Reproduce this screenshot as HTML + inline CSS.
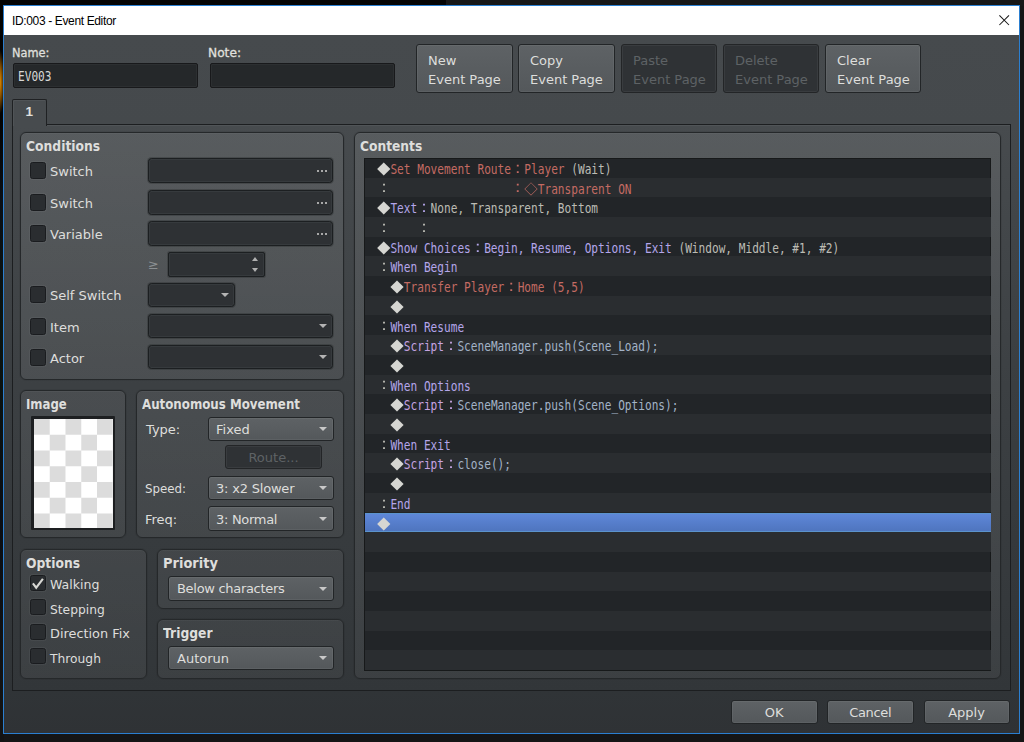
<!DOCTYPE html>
<html lang="en">
<head>
<meta charset="utf-8">
<title>ID:003 - Event Editor</title>
<style>
html,body{margin:0;padding:0;}
body{width:1024px;height:742px;overflow:hidden;position:relative;background:#131313;
  font-family:"DejaVu Sans","Liberation Sans",sans-serif;font-size:13px;color:#dededc;}
*{box-sizing:border-box;}
.abs,.abs>*{position:absolute;}
#desk{position:absolute;left:0;top:0;width:1024px;height:742px;
  background:
   radial-gradient(ellipse 4.5px 32px at 0px 82px,#e08a00 0%,#8a5200 45%,rgba(0,0,0,0) 100%),
   linear-gradient(90deg,#040404 0,#040404 446px,#171717 446px) 0 0/1024px 6px no-repeat,
   linear-gradient(#030303 0,#030303 120px,#0a0f16 200px,#0b1410 330px,#0a0e14 520px,#131313 700px) 0 0/4px 742px no-repeat,
   #151515;}
#win{position:absolute;left:3px;top:5px;width:1017px;height:729px;border:1px solid #2b7fd0;
  background:linear-gradient(#464a4d 30px,#45494c 119px,#3a3e41 380px,#303437 685px,#2f3235 728px);}
#title{position:absolute;left:0;top:0;width:1015px;height:29px;background:#fff;color:#000;font-size:12px;}
#title span{position:absolute;left:8px;top:8px;font-family:"Liberation Sans",sans-serif;font-size:12px;letter-spacing:-0.36px;white-space:nowrap;}
#close{position:absolute;left:995px;top:8.6px;}
/* everything below positioned in page coordinates via #ui offset */
#ui{position:absolute;left:-4px;top:-6px;width:1024px;height:742px;}
#ui div,#ui span{position:absolute;}
.lbl{white-space:nowrap;line-height:16px;height:16px;}
.b{font-weight:bold;font-size:13.6px;color:#dededc;transform-origin:0 50%;transform:scaleX(.908);}
.field{background:#2e3134;border:1px solid #1c1f21;border-radius:3.5px;box-shadow:inset 0 0 0 1px #363a3d,0 0 0 1px rgba(28,31,34,.28);}
.dark{background:#25282a;border:1px solid #18191b;border-radius:2px;box-shadow:inset 0 0 0 1px #2c2f31;}
.btn{border:1px solid #222527;border-radius:3px;background:linear-gradient(#5e6265,#54585b);box-shadow:inset 0 0 0 1px rgba(255,255,255,.05);}
.btn.dis{background:#2f3235;color:#5e6265;border-color:#232527;}
.grp{border:1px solid #25282a;border-radius:6px;box-shadow:inset 0 1px 0 rgba(255,255,255,.035),0 0 0 1px rgba(0,0,0,.06);}
.cb{width:16px;height:17px;background:#2a2d30;border:1px solid #1a1c1f;border-radius:2.5px;box-shadow:0 0 0 1px rgba(255,255,255,.045);}
.field+.arr{border-top-color:#b4b4b4;}
.arr{width:0;height:0;border-left:4px solid transparent;border-right:4px solid transparent;border-top:4.5px solid #c8c8c8;}
.arru{width:0;height:0;border-left:3.6px solid transparent;border-right:3.6px solid transparent;border-bottom:4px solid #b0b0b0;}
.arrd{width:0;height:0;border-left:3.6px solid transparent;border-right:3.6px solid transparent;border-top:4px solid #b0b0b0;}
.mono{font-family:"DejaVu Sans Mono","Liberation Mono",monospace;font-size:13.3px;line-height:19px;height:19px;white-space:pre;transform:scaleX(.8368);transform-origin:0 0;color:#d8d8d6;}
#checker{background:conic-gradient(#fff 0 25%,#dcdcdc 0 50%,#fff 0 75%,#dcdcdc 0) 0 0/31.5px 31.5px;}
#list{background:#222528;border:1px solid #17191a;}
.odd{background:#2a2d30;}
.sel{background:linear-gradient(#5f88da,#4e74bd);box-shadow:inset 0 1px 0 #5b93cc,inset 0 -1px 0 #5b93cc;}
.row{left:377.2px;height:19.7px;line-height:19.7px;white-space:pre;font-family:"DejaVu Sans Mono","Liberation Mono",monospace;font-size:13.3px;transform:scaleX(.8368);transform-origin:0 0;}
#ui .row span,#ui .row i{position:static;font-style:normal;}
.row i.w{display:inline-block;width:16.014px;height:19.7px;line-height:19.7px;vertical-align:top;text-align:center;transform:scaleX(1.195);font-family:"WenQuanYi Zen Hei","Noto Sans CJK JP",sans-serif;font-size:13.3px;}
.row i.dia,.row i.dia2{font-size:14px;position:relative;top:0px;}
#ui .row i.w:not(.dia):not(.dia2){font-size:16.5px;position:relative;top:-2.2px;}
.r{color:#c46b63;}
.l{color:#b4a6ea;}
.p{color:#c6a4e2;}
.g{color:#bcbcb4;}
.s{color:#a3b3c7;}
.d{color:#d6d6d2;}
.dots{width:10px;height:2px;background:linear-gradient(90deg,#a8a8a8 0 2px,transparent 2px 4px,#a8a8a8 4px 6px,transparent 6px 8px,#a8a8a8 8px 10px);}
</style>
</head>
<body>
<div id="desk"></div>
<div id="win">
 <div id="title"><span>ID:003 - Event Editor</span>
  <svg id="close" width="11" height="11" viewBox="0 0 11 11"><path d="M0.4 0.4 L10 10 M10 0.4 L0.4 10" stroke="#1a1a1a" stroke-width="1.05" fill="none"/></svg>
 </div>
 <div id="ui">

  <!-- header -->
  <div class="lbl" style="left:12px;top:45px;color:#e0e0de;-webkit-text-stroke:.3px #e0e0de;transform-origin:0 50%;transform:scaleX(.875);">Name:</div>
  <div class="dark" style="left:13px;top:63px;width:185px;height:25px;"></div>
  <div class="mono" style="left:17.6px;top:67px;">EV003</div>
  <div class="lbl" style="left:208px;top:45px;color:#e0e0de;-webkit-text-stroke:.3px #e0e0de;transform-origin:0 50%;transform:scaleX(.94);">Note:</div>
  <div class="dark" style="left:210px;top:63px;width:185px;height:25px;"></div>

  <div class="btn" style="left:416px;top:44px;width:97px;height:49px;"></div>
  <div class="lbl" style="left:428px;top:53px;">New</div>
  <div class="lbl" style="left:428px;top:72px;">Event Page</div>
  <div class="btn" style="left:518px;top:44px;width:97px;height:49px;"></div>
  <div class="lbl" style="left:530px;top:53px;">Copy</div>
  <div class="lbl" style="left:530px;top:72px;">Event Page</div>
  <div class="btn dis" style="left:621px;top:44px;width:96px;height:49px;"></div>
  <div class="lbl" style="left:633px;top:53px;color:#5e6265;">Paste</div>
  <div class="lbl" style="left:633px;top:72px;color:#5e6265;">Event Page</div>
  <div class="btn dis" style="left:723px;top:44px;width:96px;height:49px;"></div>
  <div class="lbl" style="left:735px;top:53px;color:#5e6265;">Delete</div>
  <div class="lbl" style="left:735px;top:72px;color:#5e6265;">Event Page</div>
  <div class="btn" style="left:825px;top:44px;width:96px;height:49px;"></div>
  <div class="lbl" style="left:837px;top:53px;">Clear</div>
  <div class="lbl" style="left:837px;top:72px;">Event Page</div>

  <!-- tab pane -->
  <div id="pane" style="left:12px;top:124px;width:999px;height:567px;border:1px solid #1c1e20;background:rgba(255,255,255,.012);box-shadow:inset 0 1px 0 rgba(255,255,255,.05);"></div>
  <div id="tab" style="left:12px;top:99px;width:35px;height:27px;border:1px solid #1f2123;border-bottom:none;border-radius:2px 2px 0 0;background:#474b4e;box-shadow:inset 1px 1px 0 rgba(255,255,255,.05);"></div>
  <div class="lbl" style="left:25.5px;top:104px;font-size:13.5px;font-weight:bold;font-family:'Liberation Sans',sans-serif;color:#e0e0de;">1</div>

  <!-- Conditions -->
  <div class="grp" style="left:20px;top:132px;width:324px;height:248px;background:linear-gradient(rgba(255,255,255,0.094),rgba(255,255,255,0.073));"></div>
  <div class="lbl b" style="left:26px;top:138px;">Conditions</div>
  <div class="cb" style="left:30px;top:162px;"></div>
  <div class="lbl" style="left:50px;top:164px;">Switch</div>
  <div class="field" style="left:148px;top:158px;width:185px;height:25px;"></div>
  <div class="dots" style="left:317px;top:170px;"></div>
  <div class="cb" style="left:30px;top:194px;"></div>
  <div class="lbl" style="left:50px;top:196px;">Switch</div>
  <div class="field" style="left:148px;top:190px;width:185px;height:25px;"></div>
  <div class="dots" style="left:317px;top:202px;"></div>
  <div class="cb" style="left:30px;top:225px;"></div>
  <div class="lbl" style="left:50px;top:227px;">Variable</div>
  <div class="field" style="left:148px;top:221px;width:185px;height:25px;"></div>
  <div class="dots" style="left:317px;top:233px;"></div>
  <div class="lbl" style="left:148px;top:257px;color:#8b8f92;">≥</div>
  <div class="field" style="left:168px;top:252px;width:97px;height:25px;border-radius:2px;"></div>
  <div class="arru" style="left:251.5px;top:257px;"></div>
  <div class="arrd" style="left:251.5px;top:267.5px;"></div>
  <div class="cb" style="left:30px;top:286px;"></div>
  <div class="lbl" style="left:50px;top:288px;">Self Switch</div>
  <div class="field" style="left:148px;top:283px;width:87px;height:24px;"></div>
  <div class="arr" style="left:221px;top:293px;"></div>
  <div class="cb" style="left:30px;top:318px;"></div>
  <div class="lbl" style="left:50px;top:320px;">Item</div>
  <div class="field" style="left:148px;top:314px;width:185px;height:24px;"></div>
  <div class="arr" style="left:319px;top:324px;"></div>
  <div class="cb" style="left:30px;top:349px;"></div>
  <div class="lbl" style="left:50px;top:351px;">Actor</div>
  <div class="field" style="left:148px;top:345px;width:185px;height:24px;"></div>
  <div class="arr" style="left:319px;top:355px;"></div>

  <!-- Image -->
  <div class="grp" style="left:20px;top:390px;width:106px;height:148px;background:linear-gradient(rgba(255,255,255,0.072),rgba(255,255,255,0.060));"></div>
  <div class="lbl b" style="left:26px;top:396px;transform:scaleX(.86);">Image</div>
  <div id="imgbox" style="left:30.5px;top:416px;width:84.5px;height:114px;background:#1d1f21;border-radius:1px;"></div>
  <div id="checker" style="left:33.5px;top:419px;width:79px;height:108.5px;"></div>

  <!-- Autonomous Movement -->
  <div class="grp" style="left:136px;top:390px;width:208px;height:148px;background:linear-gradient(rgba(255,255,255,0.072),rgba(255,255,255,0.060));"></div>
  <div class="lbl b" style="left:142px;top:396px;transform:scaleX(.87);">Autonomous Movement</div>
  <div class="lbl" style="left:146px;top:422px;">Type:</div>
  <div class="btn" style="left:208px;top:416.5px;width:126px;height:24.5px;"></div>
  <div class="lbl" style="left:216px;top:422px;">Fixed</div>
  <div class="arr" style="left:319px;top:427px;"></div>
  <div class="btn dis" style="left:225px;top:445px;width:97px;height:24px;"></div>
  <div class="lbl" style="left:225px;top:449.5px;width:97px;text-align:center;color:#5e6265;">Route...</div>
  <div class="lbl" style="left:145px;top:481px;transform-origin:0 50%;transform:scaleX(.91);">Speed:</div>
  <div class="btn" style="left:208px;top:475.5px;width:126px;height:24.5px;"></div>
  <div class="lbl" style="left:216px;top:481px;letter-spacing:-0.2px;">3: x2 Slower</div>
  <div class="arr" style="left:319px;top:486px;"></div>
  <div class="lbl" style="left:145px;top:512px;">Freq:</div>
  <div class="btn" style="left:208px;top:506px;width:126px;height:24.5px;"></div>
  <div class="lbl" style="left:216px;top:512px;letter-spacing:-0.3px;">3: Normal</div>
  <div class="arr" style="left:319px;top:517px;"></div>

  <!-- Options -->
  <div class="grp" style="left:20px;top:549px;width:127px;height:129.5px;background:linear-gradient(rgba(255,255,255,0.059),rgba(255,255,255,0.048));"></div>
  <div class="lbl b" style="left:26px;top:555px;">Options</div>
  <div class="cb" style="left:30px;top:575px;height:16px;"></div>
  <svg style="position:absolute;left:31px;top:577px;" width="14" height="14" viewBox="0 0 14 14"><path d="M1.9 6.3 L5.2 10.7 L11.9 1.9" stroke="#d8d8d4" stroke-width="2.1" fill="none"/></svg>
  <div class="lbl" style="left:50px;top:577px;transform-origin:0 50%;transform:scaleX(.965);">Walking</div>
  <div class="cb" style="left:30px;top:599px;height:16px;"></div>
  <div class="lbl" style="left:50px;top:601.5px;transform-origin:0 50%;transform:scaleX(.945);">Stepping</div>
  <div class="cb" style="left:30px;top:624px;height:16px;"></div>
  <div class="lbl" style="left:50px;top:626px;transform-origin:0 50%;transform:scaleX(.99);">Direction Fix</div>
  <div class="cb" style="left:30px;top:648px;height:16px;"></div>
  <div class="lbl" style="left:50px;top:650.5px;transform-origin:0 50%;transform:scaleX(.945);">Through</div>

  <!-- Priority -->
  <div class="grp" style="left:157px;top:549px;width:187px;height:60px;background:linear-gradient(rgba(255,255,255,0.059),rgba(255,255,255,0.054));"></div>
  <div class="lbl b" style="left:163px;top:555px;transform:scaleX(.956);">Priority</div>
  <div class="btn" style="left:168px;top:576px;width:166px;height:24.5px;"></div>
  <div class="lbl" style="left:177px;top:581px;letter-spacing:-0.3px;">Below characters</div>
  <div class="arr" style="left:319px;top:586.5px;"></div>

  <!-- Trigger -->
  <div class="grp" style="left:157px;top:619px;width:187px;height:60px;background:linear-gradient(rgba(255,255,255,0.053),rgba(255,255,255,0.048));"></div>
  <div class="lbl b" style="left:163px;top:625px;">Trigger</div>
  <div class="btn" style="left:168px;top:645.5px;width:166px;height:24.5px;"></div>
  <div class="lbl" style="left:177px;top:651px;">Autorun</div>
  <div class="arr" style="left:319px;top:656px;"></div>


  <!-- Contents -->
  <div class="grp" style="left:354px;top:132px;width:647px;height:546.5px;background:linear-gradient(rgba(255,255,255,0.094),rgba(255,255,255,0.048));"></div>
  <div class="lbl b" style="left:360px;top:138px;transform:scaleX(.903);">Contents</div>
  <div id="list" style="left:364px;top:158px;width:627px;height:513px;"></div>
  <div class="odd" style="left:365px;top:177.6px;width:626px;height:19.7px;"></div>
  <div class="odd" style="left:365px;top:217.0px;width:626px;height:19.7px;"></div>
  <div class="odd" style="left:365px;top:256.4px;width:626px;height:19.7px;"></div>
  <div class="odd" style="left:365px;top:295.8px;width:626px;height:19.7px;"></div>
  <div class="odd" style="left:365px;top:335.2px;width:626px;height:19.7px;"></div>
  <div class="odd" style="left:365px;top:374.6px;width:626px;height:19.7px;"></div>
  <div class="odd" style="left:365px;top:414.0px;width:626px;height:19.7px;"></div>
  <div class="odd" style="left:365px;top:453.4px;width:626px;height:19.7px;"></div>
  <div class="odd" style="left:365px;top:492.8px;width:626px;height:19.7px;"></div>
  <div class="sel" style="left:365px;top:512.5px;width:626px;height:19.7px;"></div>
  <div class="odd" style="left:365px;top:532.2px;width:626px;height:19.7px;"></div>
  <div class="odd" style="left:365px;top:571.6px;width:626px;height:19.7px;"></div>
  <div class="odd" style="left:365px;top:611.0px;width:626px;height:19.7px;"></div>
  <div class="odd" style="left:365px;top:650.4px;width:626px;height:19.7px;"></div>
  <div class="row" style="top:159.9px;"><i class="w d dia">◆</i><span class="r">Set Movement Route</span><i class="w r">：</i><span class="r">Player</span><span class="g"> (Wait)</span></div>
  <div class="row" style="top:179.6px;"><i class="w g">：</i><span class="g">                  </span><i class="w r">：</i><i class="w r dia2">◇</i><span class="r">Transparent ON</span></div>
  <div class="row" style="top:199.3px;"><i class="w d dia">◆</i><span class="l">Text</span><i class="w l">：</i><span class="g">None, Transparent, Bottom</span></div>
  <div class="row" style="top:219.0px;"><i class="w g">：</i><span class="g">    </span><i class="w g">：</i></div>
  <div class="row" style="top:238.7px;"><i class="w d dia">◆</i><span class="l">Show Choices</span><i class="w l">：</i><span class="l">Begin, Resume, Options, Exit</span><span class="g"> (Window, Middle, #1, #2)</span></div>
  <div class="row" style="top:258.4px;"><i class="w g">：</i><span class="l">When Begin</span></div>
  <div class="row" style="top:278.1px;"><span class="g">  </span><i class="w d dia">◆</i><span class="r">Transfer Player</span><i class="w r">：</i><span class="r">Home (5,5)</span></div>
  <div class="row" style="top:297.8px;"><span class="g">  </span><i class="w d dia">◆</i></div>
  <div class="row" style="top:317.5px;"><i class="w g">：</i><span class="l">When Resume</span></div>
  <div class="row" style="top:337.2px;"><span class="g">  </span><i class="w d dia">◆</i><span class="p">Script</span><i class="w p">：</i><span class="s">SceneManager.push(Scene_Load);</span></div>
  <div class="row" style="top:356.9px;"><span class="g">  </span><i class="w d dia">◆</i></div>
  <div class="row" style="top:376.6px;"><i class="w g">：</i><span class="l">When Options</span></div>
  <div class="row" style="top:396.3px;"><span class="g">  </span><i class="w d dia">◆</i><span class="p">Script</span><i class="w p">：</i><span class="s">SceneManager.push(Scene_Options);</span></div>
  <div class="row" style="top:416.0px;"><span class="g">  </span><i class="w d dia">◆</i></div>
  <div class="row" style="top:435.7px;"><i class="w g">：</i><span class="l">When Exit</span></div>
  <div class="row" style="top:455.4px;"><span class="g">  </span><i class="w d dia">◆</i><span class="p">Script</span><i class="w p">：</i><span class="s">close();</span></div>
  <div class="row" style="top:475.1px;"><span class="g">  </span><i class="w d dia">◆</i></div>
  <div class="row" style="top:494.8px;"><i class="w g">：</i><span class="l">End</span></div>
  <div class="row" style="top:514.5px;"><i class="w d dia">◆</i></div>


  <!-- bottom buttons -->
  <div class="btn" style="left:731px;top:700px;width:86.5px;height:24px;"></div>
  <div class="lbl" style="left:731px;top:704.5px;width:86.5px;text-align:center;">OK</div>
  <div class="btn" style="left:827px;top:700px;width:86.5px;height:24px;"></div>
  <div class="lbl" style="left:827px;top:704.5px;width:86.5px;text-align:center;letter-spacing:-0.3px;">Cancel</div>
  <div class="btn" style="left:923.5px;top:700px;width:86px;height:24px;"></div>
  <div class="lbl" style="left:923.5px;top:704.5px;width:86px;text-align:center;">Apply</div>

 </div>
</div>
</body>
</html>
